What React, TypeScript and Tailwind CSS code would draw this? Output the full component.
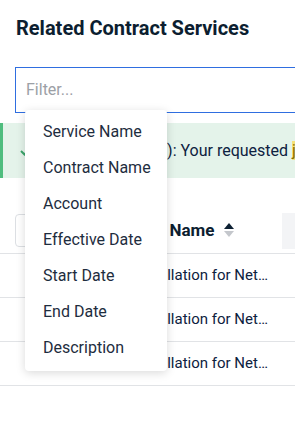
const fields = [
  "Service Name",
  "Contract Name",
  "Account",
  "Effective Date",
  "Start Date",
  "End Date",
  "Description",
];

const rows = [
  "Installation for Network Services",
  "Installation for Network Cabling",
  "Installation for Network Hardware",
];

function SortIcon() {
  return (
    <svg width="10" height="15" viewBox="0 0 10 15" className="ml-[10px]">
      <path d="M5 0 L10 6 L0 6 Z" fill="#0d2033" />
      <path d="M5 14 L10 8 L0 8 Z" fill="#c4c7cc" />
    </svg>
  );
}

export default function App() {
  return (
    <div className="relative h-[421px] w-[295px] overflow-hidden bg-white font-['Roboto',sans-serif]">
      <h2 className="px-4 pt-[14px] text-[20px] font-bold leading-7 text-[#0c1e30]">
        Related Contract Services
      </h2>

      <div className="mt-[25px] pl-[15px]">
        <div className="flex h-[46px] w-[400px] items-center border border-[#2f6ee0] px-[10px]">
          <span className="text-[16px] text-[#9ca0a6]">Filter...</span>
        </div>
      </div>

      <div className="mt-[10px] flex h-[55px] w-[400px] items-center border-l-[3px] border-[#4fbd7e] bg-[#e4f3ea] pl-[17px]">
        <svg width="12" height="10" viewBox="0 0 12 10" className="shrink-0">
          <path d="M1 5 L4.5 8.5 L11 1.5" stroke="#3aa46a" strokeWidth="2" fill="none" />
        </svg>
        <span className="ml-[33px] whitespace-nowrap text-[16px] text-[#0d2140]">
          Success (200)): Your requested{" "}
          <span className="bg-[#f4e27a] text-[#8a6d00]">jobs</span> were updated
        </span>
      </div>

      <div className="mt-[30px] w-[400px]">
        <div className="flex h-[46px] items-center border-b border-[#e1e3e6]">
          <div className="ml-[15px] h-[33px] w-[30px] rounded-sm border border-[#dcdfe3]" />
          <div className="ml-[63px] flex items-center text-[17px] font-bold text-[#0c1e30]">
            Service Name
            <SortIcon />
          </div>
          <div className="ml-[48px] h-[36px] w-[60px] bg-[#f3f4f6]" />
        </div>
        {rows.map((r) => (
          <div key={r} className="flex h-[44px] items-center border-b border-[#e1e3e6]">
            <div className="w-[134px] shrink-0" />
            <div className="w-[145px] truncate text-[15px] text-[#0d2140]">{r}</div>
          </div>
        ))}
      </div>

      <div className="absolute left-[25px] top-[110px] w-[142px] rounded bg-white pb-[5px] pt-[4px] shadow-[0_2px_10px_rgba(0,0,0,0.15)]">
        {fields.map((f) => (
          <div
            key={f}
            className="flex h-[36px] items-center whitespace-nowrap pl-[18px] text-[16px] text-[#1e2d3e]"
          >
            {f}
          </div>
        ))}
      </div>
    </div>
  );
}
